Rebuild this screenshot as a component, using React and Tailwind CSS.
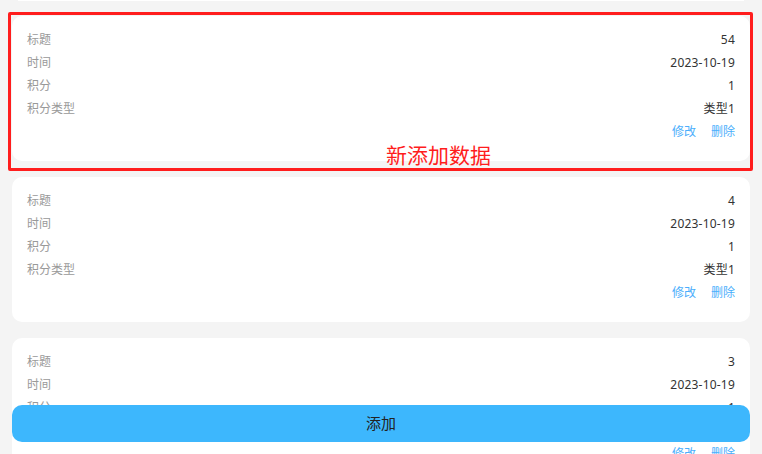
import React from "react";

const items = [
  { id: 54, title: "54", time: "2023-10-19", score: "1", type: "类型1", isNew: true },
  { id: 4, title: "4", time: "2023-10-19", score: "1", type: "类型1" },
  { id: 3, title: "3", time: "2023-10-19", score: "1", type: "类型1" },
];

function Row({ label, value }) {
  return (
    <div className="flex h-[23px] items-center justify-between">
      <span className="text-[#999]">{label}</span>
      <span className="tracking-[0.2px] text-[#333]">{value}</span>
    </div>
  );
}

function Card({ item }) {
  return (
    <div className="relative">
      <div className="rounded-[10px] bg-white px-[15px] pt-[12px] pb-[18px]">
        <Row label="标题" value={item.title} />
        <Row label="时间" value={item.time} />
        <Row label="积分" value={item.score} />
        <Row label="积分类型" value={item.type} />
        <div className="flex h-[23px] items-center justify-end gap-[15px] text-[#4aaefc]">
          <span>修改</span>
          <span>删除</span>
        </div>
      </div>
      {item.isNew && (
        <div className="pointer-events-none absolute -top-[4px] -left-[4px] -right-[3px] -bottom-[10px] rounded-[2px] border-[3px] border-[#ff1d1d]">
          <span className="absolute left-[375px] top-[128px] text-[21px] leading-[24px] text-[#ff1d1d]">
            新添加数据
          </span>
        </div>
      )}
    </div>
  );
}

export default function App() {
  return (
    <div
      className="relative h-[454px] w-full overflow-hidden bg-[#f4f4f4] text-[12px]"
      style={{ fontFamily: '"Noto Sans", "Noto Sans CJK SC", sans-serif' }}
    >
      <div className="px-3">
        {/* bottom edge of the card scrolled above */}
        <div className="mx-[6px] h-px bg-white" />
        <div className="mt-[15px] flex flex-col gap-4">
          {items.map((item) => (
            <Card key={item.id} item={item} />
          ))}
        </div>
      </div>
      <button className="absolute bottom-3 left-3 right-3 h-[37px] rounded-[10px] bg-[#3db7fd] text-[15px] text-[#222]">
        添加
      </button>
    </div>
  );
}
